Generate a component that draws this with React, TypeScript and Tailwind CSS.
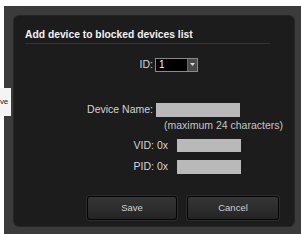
import React from 'react'

const font = { fontFamily: '"Liberation Sans", Arial, sans-serif' }

function Field({ w, h }: { w: string; h: string }) {
  return <div className={`${w} ${h} bg-[#b9b9b9]`} />
}

export default function App() {
  return (
    <div className="relative w-[301px] h-[234px] bg-white overflow-hidden" style={font}>
      {/* page text peeking out from behind the dialog */}
      <div className="absolute left-0 top-[88px] w-[11px] h-[28px] bg-[#f4f4f4] z-10 flex items-center">
        <span className="text-[8px] leading-[10px] text-[#222] tracking-[-0.3px]">ve</span>
      </div>

      <div className="ml-[4px] pt-[9px] pl-[9px] pr-[6px] mt-[6px] w-[297px] h-[228px] bg-[#3b3b3b]">
        <div className="w-[282px] h-[212px] bg-[#1c1c1c] rounded-[6px] border border-[#262626] flex flex-col">
          <div className="mt-[13px] pl-[11px] text-[10.3px] leading-[12px] font-bold text-[#f2f2f2]">
            Add device to blocked devices list
          </div>
          <div className="mt-[2px] ml-[11px] w-[245px] h-px bg-[#333333]" />

          <div className="flex items-center mt-[13px] text-[10.5px] text-[#d4d4d4]">
            <span className="w-[139px] text-right">ID:</span>
            <div className="ml-[2px] w-[43px] h-[14px] bg-black border border-[#8a8a8a] flex">
              <span className="flex-1 pl-[3px] text-[10px] leading-[12px] text-white">1</span>
              <div className="w-[10px] h-full bg-[#4a4a4a] border-l border-[#6a6a6a] flex items-center justify-center">
                <svg width="5" height="3" viewBox="0 0 5 3">
                  <path d="M0 0h5L2.5 3z" fill="#dddddd" />
                </svg>
              </div>
            </div>
          </div>

          <div className="flex items-center mt-[29px] text-[10.5px] text-[#d4d4d4]">
            <span className="w-[139px] text-right">Device Name:</span>
            <div className="ml-[3px]">
              <Field w="w-[84px]" h="h-[14px]" />
            </div>
          </div>
          <div className="mt-[1px] pl-[150px] text-[10.5px] leading-[12px] text-[#c4c4c4]">
            (maximum 24 characters)
          </div>

          <div className="flex items-center mt-[7px] text-[10.5px] text-[#d4d4d4]">
            <span className="w-[154px] text-right">VID: 0x</span>
            <div className="ml-[9px]">
              <Field w="w-[64px]" h="h-[13px]" />
            </div>
          </div>
          <div className="flex items-center mt-[6px] text-[10.5px] text-[#d4d4d4]">
            <span className="w-[154px] text-right">PID: 0x</span>
            <div className="ml-[9px]">
              <Field w="w-[64px]" h="h-[14px]" />
            </div>
          </div>

          <div className="flex gap-[10px] mt-[21px] pl-[73px]">
            <button className="w-[90px] h-[24px] rounded-[3px] border border-[#050505] bg-gradient-to-b from-[#363636] to-[#242424] text-[9.5px] text-[#d0d0d0] shadow-[0_0_0_1px_#2c2c2c]">
              Save
            </button>
            <button className="w-[92px] h-[24px] rounded-[3px] border border-[#050505] bg-gradient-to-b from-[#363636] to-[#242424] text-[9.5px] text-[#d0d0d0] shadow-[0_0_0_1px_#2c2c2c]">
              Cancel
            </button>
          </div>
        </div>
      </div>
    </div>
  )
}
